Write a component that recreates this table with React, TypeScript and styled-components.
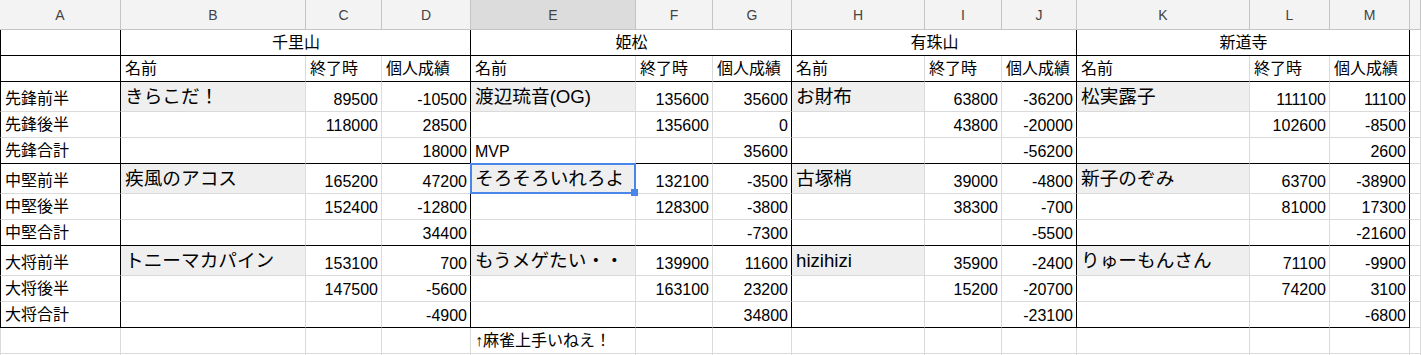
import React from "react";
import styled, { createGlobalStyle } from "styled-components";

const GlobalStyle = createGlobalStyle`
  body {
    margin: 0;
    background: #fff;
    overflow: hidden;
    font-family: "Liberation Sans", "Noto Sans CJK JP", sans-serif;
  }
`;

const COL_WIDTHS = [121, 185, 76, 89, 165, 77, 79, 133, 77, 75, 173, 80, 80, 11];
const ROW_HEIGHTS = [30, 26, 26, 30, 26, 26, 30, 26, 26, 30, 26, 26, 26, 1];
const LETTERS = "ABCDEFGHIJKLMN".split("");
const GRID = "#dadada";
const BLACK = "#000";

const Sheet = styled.div`
  display: grid;
  grid-template-columns: ${COL_WIDTHS.map((w) => `${w}px`).join(" ")};
  grid-template-rows: ${ROW_HEIGHTS.map((h) => `${h}px`).join(" ")};
  width: 1421px;
  height: 355px;
  overflow: hidden;
`;

const HeaderCell = styled.div<{ $active?: boolean }>`
  box-sizing: border-box;
  display: flex;
  align-items: center;
  justify-content: center;
  background: ${(p) => (p.$active ? "#dcdcdc" : "#f3f3f3")};
  border-right: 1px solid #c4c4c4;
  border-bottom: 1px solid #c4c4c4;
  color: #444;
  font-size: 14px;
`;

const Cell = styled.div<{
  $align: "left" | "right" | "center";
  $right: string;
  $bottom: string;
  $left?: string;
  $span: number;
  $big?: boolean;
  $bg?: string;
  $selected?: boolean;
}>`
  position: relative;
  box-sizing: border-box;
  grid-column: span ${(p) => p.$span};
  display: flex;
  align-items: flex-end;
  justify-content: ${(p) =>
    p.$align === "right" ? "flex-end" : p.$align === "center" ? "center" : "flex-start"};
  padding: 0 3px ${(p) => (p.$big ? "3px" : "2px")} 4px;
  background: ${(p) => p.$bg ?? "#fff"};
  border-right: 1px solid ${(p) => p.$right};
  border-bottom: 1px solid ${(p) => p.$bottom};
  border-left: ${(p) => (p.$left ? `1px solid ${p.$left}` : "none")};
  font-size: ${(p) => (p.$big ? "18.67px" : "16px")};
  color: #000;
  white-space: nowrap;
  overflow: ${(p) => (p.$selected ? "visible" : "hidden")};
`;

const Selection = styled.span`
  position: absolute;
  top: -1px;
  left: -1px;
  right: -1px;
  bottom: -1px;
  border: 2px solid #4a86e8;
  z-index: 2;
  pointer-events: none;
`;

const Handle = styled.span`
  position: absolute;
  right: -4px;
  bottom: -4px;
  width: 7px;
  height: 7px;
  background: #4a86e8;
`;

interface Player {
  name: string;
  rows: [number | null, number][];
  note?: string;
  selected?: boolean;
}

interface Team {
  name: string;
  players: Player[];
}

const teams: Team[] = [
  {
    name: "千里山",
    players: [
      { name: "きらこだ！", rows: [[89500, -10500], [118000, 28500], [null, 18000]] },
      { name: "疾風のアコス", rows: [[165200, 47200], [152400, -12800], [null, 34400]] },
      { name: "トニーマカパイン", rows: [[153100, 700], [147500, -5600], [null, -4900]] },
    ],
  },
  {
    name: "姫松",
    players: [
      { name: "渡辺琉音(OG)", rows: [[135600, 35600], [135600, 0], [null, 35600]], note: "MVP" },
      { name: "そろそろいれろよ", rows: [[132100, -3500], [128300, -3800], [null, -7300]], selected: true },
      { name: "もうメゲたい・・", rows: [[139900, 11600], [163100, 23200], [null, 34800]] },
    ],
  },
  {
    name: "有珠山",
    players: [
      { name: "お財布", rows: [[63800, -36200], [43800, -20000], [null, -56200]] },
      { name: "古塚梢", rows: [[39000, -4800], [38300, -700], [null, -5500]] },
      { name: "hizihizi", rows: [[35900, -2400], [15200, -20700], [null, -23100]] },
    ],
  },
  {
    name: "新道寺",
    players: [
      { name: "松実露子", rows: [[111100, 11100], [102600, -8500], [null, 2600]] },
      { name: "新子のぞみ", rows: [[63700, -38900], [81000, 17300], [null, -21600]] },
      { name: "りゅーもんさん", rows: [[71100, -9900], [74200, 3100], [null, -6800]] },
    ],
  },
];

const positions = ["先鋒", "中堅", "大将"];
const halves = ["前半", "後半", "合計"];

interface CellSpec {
  text?: string;
  align?: "left" | "right" | "center";
  span?: number;
  big?: boolean;
  bg?: string;
  selected?: boolean;
}

const buildRows = (): CellSpec[][] => {
  const rows: CellSpec[][] = [];
  rows.push([{}, ...teams.map((t) => ({ text: t.name, align: "center" as const, span: 3 })), {}]);
  rows.push([
    {},
    ...teams.flatMap(() => [{ text: "名前" }, { text: "終了時" }, { text: "個人成績" }]),
    {},
  ]);
  positions.forEach((pos, p) => {
    halves.forEach((half, h) => {
      rows.push([
        { text: pos + half },
        ...teams.flatMap((t) => {
          const pl = t.players[p];
          const [end, score] = pl.rows[h];
          return [
            {
              text: h === 0 ? pl.name : h === 2 ? pl.note : undefined,
              big: h === 0,
              bg: h === 0 ? "#efefef" : undefined,
              selected: h === 0 && pl.selected,
            },
            { text: end === null ? undefined : String(end), align: "right" as const },
            { text: String(score), align: "right" as const },
          ];
        }),
        {},
      ]);
    });
  });
  const note: CellSpec[] = LETTERS.map(() => ({}));
  note[4] = { text: "↑麻雀上手いねえ！" };
  rows.push(note);
  rows.push(LETTERS.map(() => ({})));
  return rows;
};

const groupEnds = new Set([0, 3, 6, 9, 12]);
const blackBottoms = new Set([1, 2, 5, 8, 11]);

const App: React.FC = () => {
  const rows = buildRows();
  return (
    <>
      <GlobalStyle />
      <Sheet>
        {LETTERS.map((l) => (
          <HeaderCell key={l} $active={l === "E"}>
            {l === "N" ? "" : l}
          </HeaderCell>
        ))}
        {rows.map((row, ri) => {
          const r = ri + 1;
          const framed = r >= 1 && r <= 11;
          let col = 0;
          return row.map((c, ci) => {
            const span = c.span ?? 1;
            const lastCol = col + span - 1;
            const firstCol = col;
            col += span;
            const right = framed && groupEnds.has(lastCol) ? BLACK : GRID;
            const bottom = blackBottoms.has(r) && lastCol <= 12 ? BLACK : GRID;
            return (
              <Cell
                key={`${r}-${ci}`}
                $align={c.align ?? "left"}
                $span={span}
                $right={right}
                $bottom={bottom}
                $left={firstCol === 0 ? (framed ? BLACK : GRID) : undefined}
                $big={c.big}
                $bg={c.bg}
                $selected={c.selected}
              >
                {c.text}
                {c.selected && (
                  <Selection>
                    <Handle />
                  </Selection>
                )}
              </Cell>
            );
          });
        })}
      </Sheet>
    </>
  );
};

export default App;
